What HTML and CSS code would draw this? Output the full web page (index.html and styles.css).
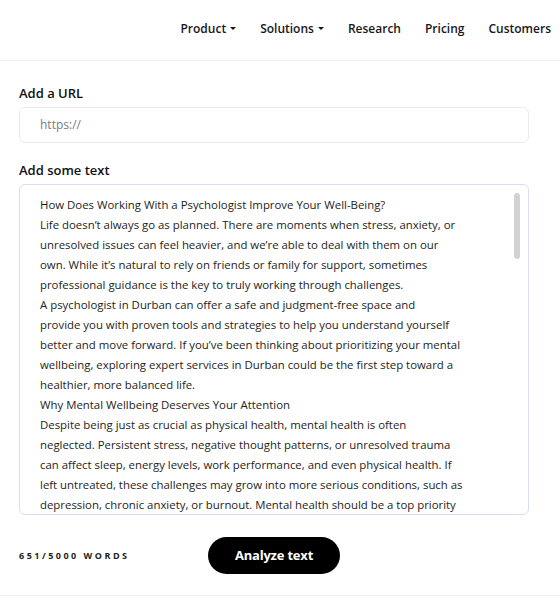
FILE: index.html
```html
<!DOCTYPE html>
<html>
<head>
<meta charset="utf-8">
<link rel="stylesheet" href="styles.css">
</head>
<body>
<header class="topbar">
  <nav class="nav">
    <a class="nav-item">Product <span class="caret"></span></a>
    <a class="nav-item">Solutions <span class="caret"></span></a>
    <a class="nav-item">Research</a>
    <a class="nav-item">Pricing</a>
    <a class="nav-item">Customers</a>
  </nav>
</header>
<main class="main">
  <label class="label">Add a URL</label>
  <div class="input">https://</div>
  <label class="label label-text">Add some text</label>
  <div class="textarea">
    <div class="text">
      <span class="line">How Does Working With a Psychologist Improve Your Well-Being?</span>
      <span class="line">Life doesn’t always go as planned. There are moments when stress, anxiety, or</span>
      <span class="line">unresolved issues can feel heavier, and we’re able to deal with them on our</span>
      <span class="line">own. While it’s natural to rely on friends or family for support, sometimes</span>
      <span class="line">professional guidance is the key to truly working through challenges.</span>
      <span class="line">A psychologist in Durban can offer a safe and judgment-free space and</span>
      <span class="line">provide you with proven tools and strategies to help you understand yourself</span>
      <span class="line">better and move forward. If you’ve been thinking about prioritizing your mental</span>
      <span class="line">wellbeing, exploring expert services in Durban could be the first step toward a</span>
      <span class="line">healthier, more balanced life.</span>
      <span class="line">Why Mental Wellbeing Deserves Your Attention</span>
      <span class="line">Despite being just as crucial as physical health, mental health is often</span>
      <span class="line">neglected. Persistent stress, negative thought patterns, or unresolved trauma</span>
      <span class="line">can affect sleep, energy levels, work performance, and even physical health. If</span>
      <span class="line">left untreated, these challenges may grow into more serious conditions, such as</span>
      <span class="line">depression, chronic anxiety, or burnout. Mental health should be a top priority</span>
    </div>
    <div class="scrollbar"></div>
  </div>
  <div class="footer">
    <span class="count">651/5000 WORDS</span>
    <button class="btn">Analyze text</button>
  </div>
</main>
<div class="bottom-line"></div>
</body>
</html>
```
FILE: styles.css
```css
html, body {
  margin: 0;
  padding: 0;
  background: #fff;
  font-family: "Open Sans", "Liberation Sans", sans-serif;
  color: #1b1b1f;
}
.topbar {
  height: 60px;
  border-bottom: 1px solid #efeff3;
  display: flex;
  justify-content: flex-end;
  align-items: center;
}
.nav {
  display: flex;
  gap: 24px;
  padding-right: 9px;
  padding-bottom: 4px;
}
.nav-item {
  font-size: 12px;
  font-weight: 600;
  color: #16161a;
  display: flex;
  align-items: center;
  gap: 4px;
}
.caret {
  width: 0;
  height: 0;
  border-left: 3px solid transparent;
  border-right: 3px solid transparent;
  border-top: 3.5px solid #16161a;
  margin-top: 1px;
}
.main {
  padding: 0 31px 0 19px;
  display: flex;
  flex-direction: column;
}
.label {
  display: block;
  font-size: 13px;
  font-weight: 600;
  color: #111;
  margin-top: 23px;
  height: 19px;
  line-height: 19px;
}
.label-text {
  margin-top: 18px;
}
.input {
  margin-top: 4px;
  height: 36px;
  border: 1px solid #ebebee;
  border-radius: 6px;
  box-sizing: border-box;
  padding-left: 20px;
  line-height: 34px;
  font-size: 12px;
  color: #7b7b80;
}
.textarea {
  position: relative;
  margin-top: 4px;
  height: 331px;
  border: 1px solid #d8dcf7;
  border-radius: 6px;
  box-sizing: border-box;
  overflow: hidden;
  padding: 10px 0 0 20px;
}
.text {
  font-size: 11.4px;
  line-height: 20px;
  color: #1d1d22;
}
.line {
  display: block;
  white-space: nowrap;
}
.scrollbar {
  position: absolute;
  top: 8px;
  right: 8px;
  width: 6px;
  height: 66px;
  border-radius: 3px;
  background: #d3d3d6;
}
.footer {
  display: flex;
  align-items: center;
  height: 80px;
}
.count {
  font-size: 9px;
  font-weight: 700;
  letter-spacing: 2.5px;
  color: #222;
  width: 189px;
}
.btn {
  width: 132px;
  height: 37px;
  border-radius: 19px;
  background: #000;
  color: #fff;
  border: none;
  font-family: inherit;
  font-size: 13px;
  font-weight: 700;
  letter-spacing: -0.2px;
}
.bottom-line {
  height: 1px;
  background: #eef0f8;
}
```
